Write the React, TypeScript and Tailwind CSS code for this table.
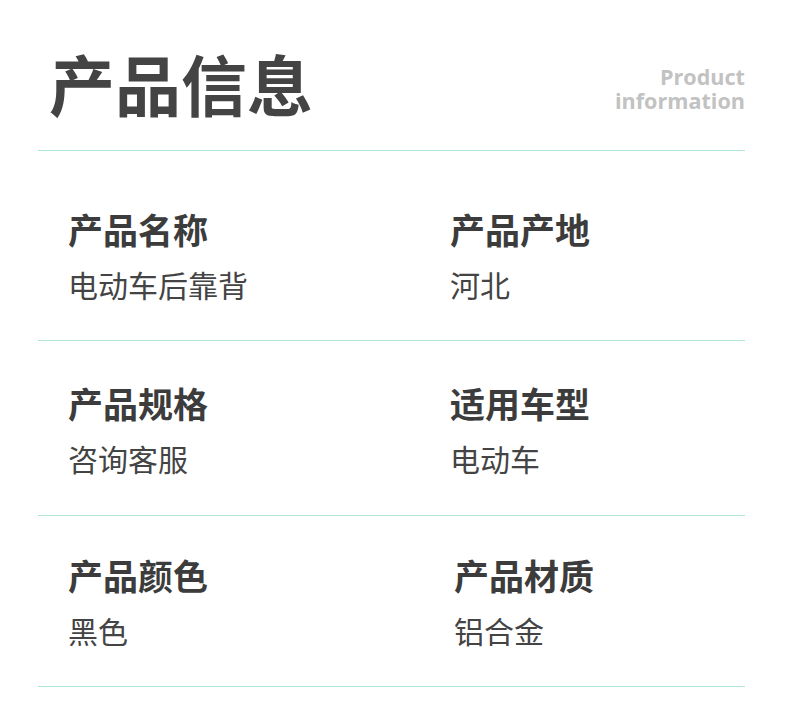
const rows = [
  {
    height: 'h-[189px]',
    pad: 'pt-[60px]',
    items: [
      { label: '产品名称', value: '电动车后靠背' },
      { label: '产品产地', value: '河北' },
    ],
  },
  {
    height: 'h-[174px]',
    pad: 'pt-[44px]',
    items: [
      { label: '产品规格', value: '咨询客服' },
      { label: '适用车型', value: '电动车' },
    ],
  },
  {
    height: 'h-[170px]',
    pad: 'pt-[41px]',
    items: [
      { label: '产品颜色', value: '黑色' },
      { label: '产品材质', value: '铝合金', shift: true },
    ],
  },
]

function Divider() {
  return <div className="h-px bg-[#aee5d8]" />
}

export default function App() {
  return (
    <div
      className="w-[790px] h-[707px] bg-white overflow-hidden"
      style={{ fontFamily: '"Noto Sans CJK SC", "Noto Sans", sans-serif' }}
    >
      <div className="ml-[38px] w-[707px]">
        <div className="h-[150px] flex items-start justify-between">
          <h1 className="mt-[46px] ml-[11px] text-[66px] leading-[72px] font-bold text-[#444444]">
            产品信息
          </h1>
          <p
            className="mt-[65px] text-right text-[21.6px] leading-[24px] font-bold text-[#c2c2c2]"
            style={{ fontFamily: '"Open Sans", sans-serif' }}
          >
            Product
            <br />
            information
          </p>
        </div>
        <Divider />

        {rows.map((row, i) => (
          <div key={i}>
            <div className={`${row.height} ${row.pad} grid grid-cols-[382px_1fr]`}>
              {row.items.map((item) => (
                <div
                  key={item.label}
                  className={item.shift ? 'pl-[34px]' : 'pl-[30px]'}
                >
                  <div className="text-[35px] leading-[35px] font-bold text-[#3c3c3c]">
                    {item.label}
                  </div>
                  <div className="mt-[23px] text-[30px] leading-[30px] font-normal text-[#444444]">
                    {item.value}
                  </div>
                </div>
              ))}
            </div>
            <Divider />
          </div>
        ))}
      </div>
    </div>
  )
}
